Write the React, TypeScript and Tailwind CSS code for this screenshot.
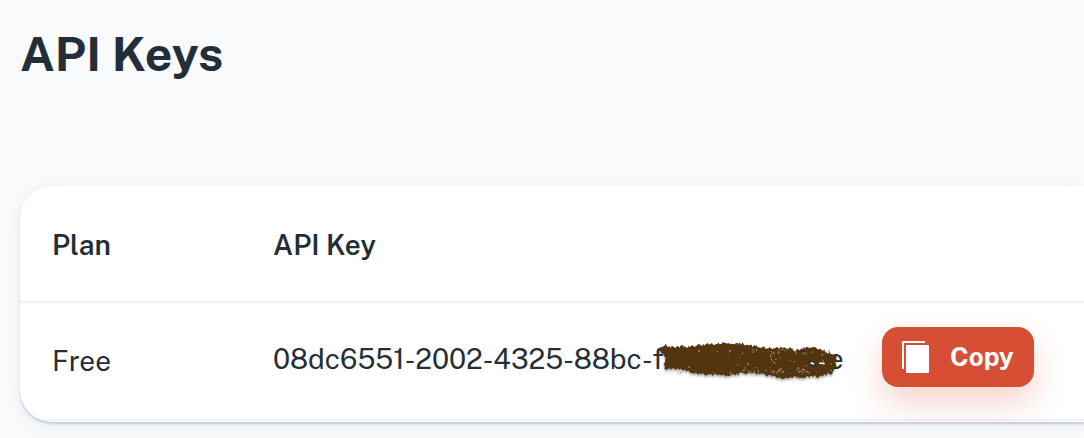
import React from "react";

type ApiKeyRow = { plan: string; prefix: string; suffix: string };

const rows: ApiKeyRow[] = [
  { plan: "Free", prefix: "08dc6551-2002-4325-88bc-f", suffix: "e" },
];

const outline: [number, number][] = [
  [60, 52], [66, 45], [78, 44], [92, 53], [110, 50], [180, 46], [240, 41], [320, 41], [330, 48], [360, 50],
  [400, 54], [440, 51], [470, 60], [500, 50], [540, 59], [580, 71], [589, 78],
  [587, 110], [576, 128], [540, 139], [460, 143], [400, 141], [360, 131], [300, 131],
  [270, 138], [220, 134], [170, 131], [120, 119], [76, 117], [72, 98], [78, 82], [62, 66],
];

function makeRandom(seed: number) {
  let value = seed;
  return () => {
    value = (value * 16807) % 2147483647;
    return value / 2147483647;
  };
}

function roughEdge() {
  const random = makeRandom(41);
  const points: string[] = [];
  outline.forEach(([x, y], i) => {
    const [nx, ny] = outline[(i + 1) % outline.length];
    const steps = Math.max(2, Math.round(Math.hypot(nx - x, ny - y) / 4));
    for (let s = 0; s < steps; s++) {
      const t = s / steps;
      const px = x + (nx - x) * t + (random() - 0.5) * 6;
      const py = y + (ny - y) * t + (random() - 0.5) * 10;
      points.push(`${px.toFixed(1)},${py.toFixed(1)}`);
    }
  });
  return points.join(" ");
}

function specks() {
  const random = makeRandom(977);
  return Array.from({ length: 110 }, () => {
    const x = random() < 0.12 ? 90 + random() * 170 : 265 + random() * 310;
    const edge = random() < 0.45;
    const y = edge ? (random() < 0.5 ? 58 : 120) + random() * 10 : 62 + random() * 66;
    return { x, y, w: 3 + random() * 6, h: 2 + random() * 2, turn: random() * 180, dark: random() < 0.3 };
  });
}

const edgePoints = roughEdge();
const gaps = specks();

function Scribble() {
  return (
    <svg
      viewBox="54 30 546 114"
      className="absolute -left-0.5 top-1/2 h-[38px] w-[182px] -translate-y-1/2 overflow-visible drop-shadow-[0_2px_1px_rgba(0,0,0,0.3)]"
      aria-hidden="true"
    >
      <polygon points={edgePoints} fill="#533610" />
      {gaps.map((g, i) => (
        <ellipse
          key={i}
          cx={g.x}
          cy={g.y}
          rx={g.w / 2}
          ry={g.h / 2}
          transform={`rotate(${g.turn} ${g.x} ${g.y})`}
          fill={g.dark ? "#3b3a36" : "#a8977d"}
        />
      ))}
      <path d="M402 65q-14 8-9 21t15 14" fill="none" stroke="#a8977d" strokeWidth="3" strokeDasharray="9 3" />
      <path d="M508 93l8 12 14 2" fill="none" stroke="#26303a" strokeWidth="6" />
      <path d="M512 98l10 5M537 99l17 2" fill="none" stroke="#ffffff" strokeWidth="5" />
      <path d="M500 89l12 3M534 96l14-2" fill="none" stroke="#26303a" strokeWidth="3" />
      <path d="M470 66l18-3 11 4" fill="none" stroke="#26303a" strokeWidth="3" />
    </svg>
  );
}

function CopyIcon() {
  return (
    <svg viewBox="0 0 28 32" className="h-8 w-7" aria-hidden="true">
      <path d="M1 0H23V2H2V28H1Q0 28 0 27V1Q0 0 1 0Z" fill="#fff" />
      <rect x="4" y="4" width="23" height="28" rx="1" fill="#fff" />
    </svg>
  );
}

export default function App() {
  return (
    <main className="min-h-screen bg-[#f9fafc] pl-5 pt-[18px] font-['Public_Sans','Inter',sans-serif] text-[#242e39]">
      <h1 className="text-[48px] font-bold leading-[72px]">API Keys</h1>
      <section className="mt-24 overflow-hidden rounded-l-[32px] bg-white pb-px shadow-[0_2px_2px_rgba(145,164,183,0.45),0_4px_16px_rgba(145,158,171,0.16)]">
        <table className="w-full border-collapse text-left text-[28px] leading-10">
          <thead>
            <tr className="h-[116px] border-b-2 border-[#f2f3f4]">
              <th className="w-[221px] pl-8 pt-0.5 font-semibold">Plan</th>
              <th className="pl-8 pt-0.5 font-semibold">API Key</th>
            </tr>
          </thead>
          <tbody>
            {rows.map((row) => (
              <tr key={row.plan} className="h-[118px] border-b-2 border-[#f2f3f4]">
                <td className="pl-8">{row.plan}</td>
                <td className="pb-2 pl-8">
                  <div className="flex items-center whitespace-nowrap">
                    <div className="flex w-[609px] items-center pt-1">
                      <span>{row.prefix}</span>
                      <span className="relative -ml-1 h-10 w-[168px]">
                        <Scribble />
                      </span>
                      <span>{row.suffix}</span>
                    </div>
                    <button
                      type="button"
                      className="flex h-[60px] w-[152px] items-center gap-5 rounded-2xl bg-[#d64f34] pl-5 text-[26px] font-bold text-white shadow-[0_16px_32px_rgba(214,79,52,0.24)]"
                    >
                      <CopyIcon />
                      Copy
                    </button>
                  </div>
                </td>
              </tr>
            ))}
          </tbody>
        </table>
      </section>
    </main>
  );
}
